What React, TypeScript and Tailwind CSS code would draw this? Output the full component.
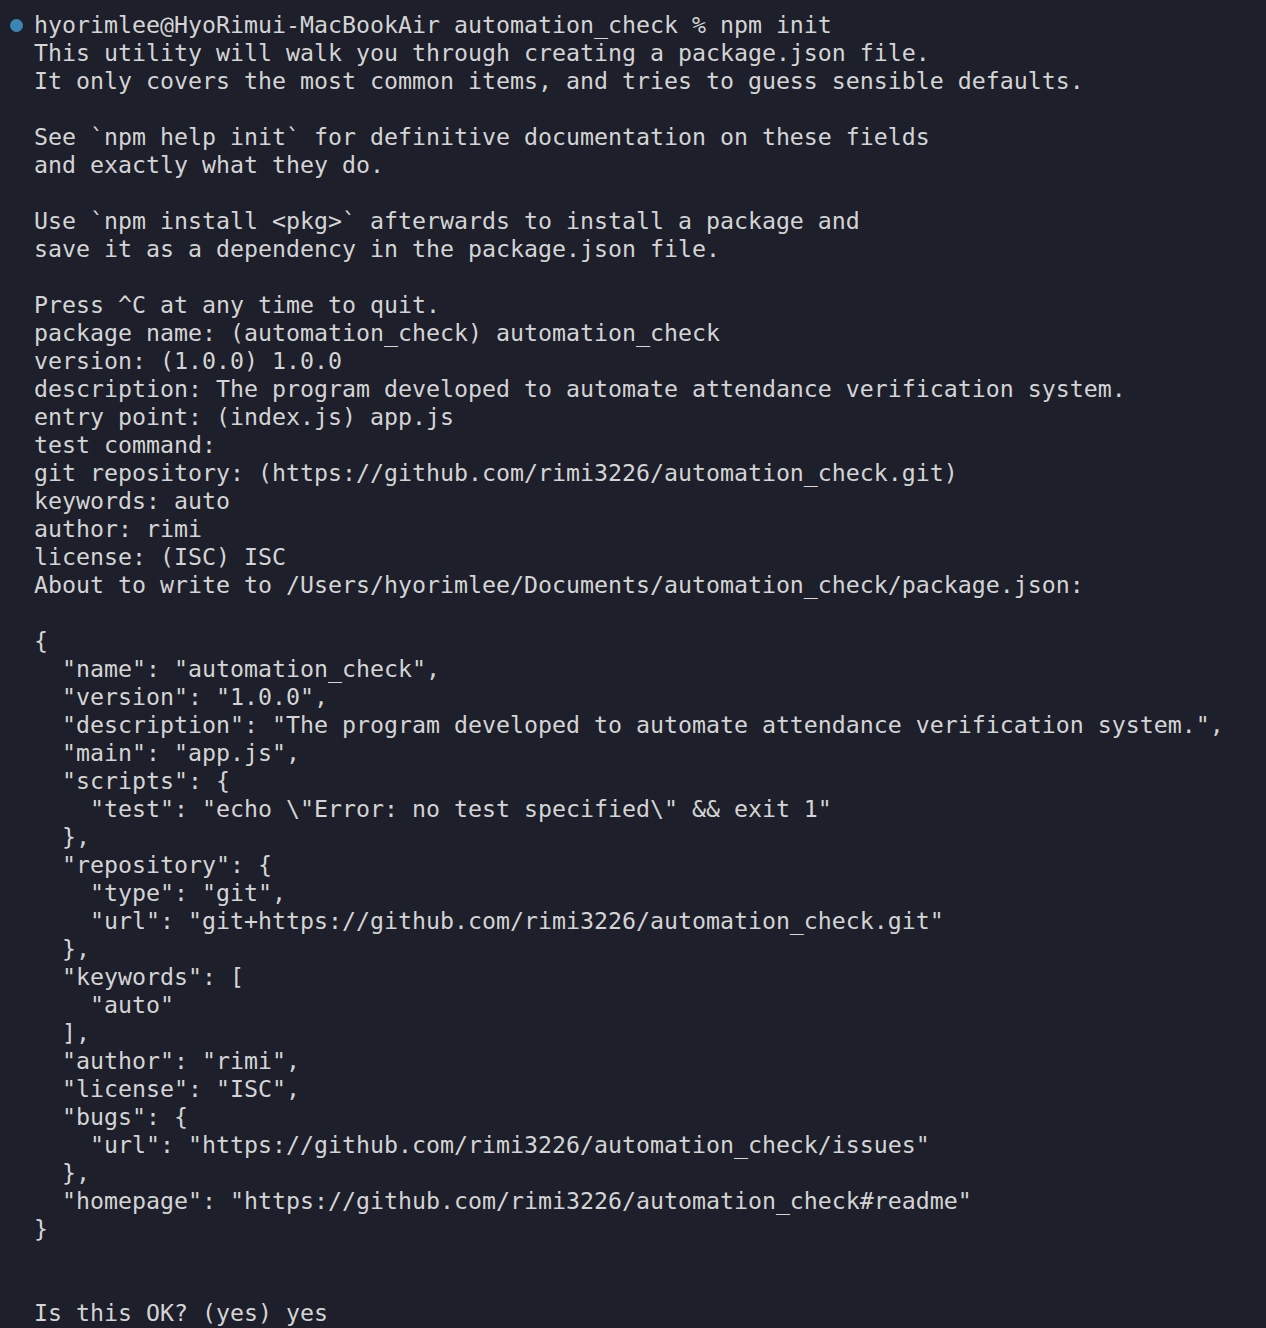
const lines = [
  "hyorimlee@HyoRimui-MacBookAir automation_check % npm init",
  "This utility will walk you through creating a package.json file.",
  "It only covers the most common items, and tries to guess sensible defaults.",
  "",
  "See `npm help init` for definitive documentation on these fields",
  "and exactly what they do.",
  "",
  "Use `npm install <pkg>` afterwards to install a package and",
  "save it as a dependency in the package.json file.",
  "",
  "Press ^C at any time to quit.",
  "package name: (automation_check) automation_check",
  "version: (1.0.0) 1.0.0",
  "description: The program developed to automate attendance verification system.",
  "entry point: (index.js) app.js",
  "test command:",
  "git repository: (https://github.com/rimi3226/automation_check.git)",
  "keywords: auto",
  "author: rimi",
  "license: (ISC) ISC",
  "About to write to /Users/hyorimlee/Documents/automation_check/package.json:",
  "",
  "{",
  '  "name": "automation_check",',
  '  "version": "1.0.0",',
  '  "description": "The program developed to automate attendance verification system.",',
  '  "main": "app.js",',
  '  "scripts": {',
  '    "test": "echo \\"Error: no test specified\\" && exit 1"',
  "  },",
  '  "repository": {',
  '    "type": "git",',
  '    "url": "git+https://github.com/rimi3226/automation_check.git"',
  "  },",
  '  "keywords": [',
  '    "auto"',
  "  ],",
  '  "author": "rimi",',
  '  "license": "ISC",',
  '  "bugs": {',
  '    "url": "https://github.com/rimi3226/automation_check/issues"',
  "  },",
  '  "homepage": "https://github.com/rimi3226/automation_check#readme"',
  "}",
  "",
  "",
  "Is this OK? (yes) yes",
];

export default function App() {
  return (
    <div className="min-h-screen bg-[#1d1f2b] pt-[11px] text-[#d4d4d4] font-['DejaVu_Sans_Mono',monospace] text-[23.25px] leading-[28px] overflow-hidden">
      {lines.map((line, i) => (
        <div key={i} className="grid grid-cols-[34px_1fr] h-[28px]">
          {/* gutter */}
          <div className="flex items-center justify-center pr-[2px]">
            {i === 0 && <span className="w-[13px] h-[13px] rounded-full bg-[#3c86b6]" />}
          </div>
          <div className="whitespace-pre">{line}</div>
        </div>
      ))}
    </div>
  );
}
